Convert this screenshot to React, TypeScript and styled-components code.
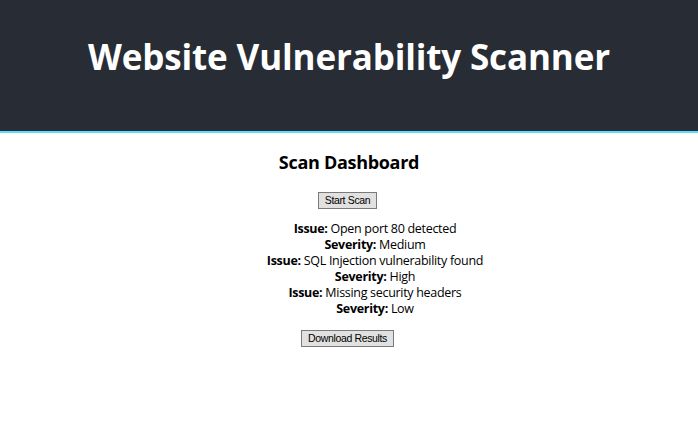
import React from "react";
import styled, { createGlobalStyle } from "styled-components";

const Global = createGlobalStyle`
  html, body { margin: 0; padding: 0; background: #ffffff; }
  body { font-family: "Open Sans", "Noto Sans", sans-serif; color: #000; }
`;

const Header = styled.header`
  background: #282c34;
  height: 131px;
  border-bottom: 2px solid #61dafb;
  display: flex;
  align-items: center;
  justify-content: center;
`;

const Title = styled.h1`
  margin: 0;
  color: #ffffff;
  font-size: 35px;
  font-weight: 700;
  letter-spacing: -0.15px;
  padding-bottom: 18px;
`;

const Main = styled.main`
  display: flex;
  flex-direction: column;
  align-items: center;
  padding-top: 17px;
`;

const Heading = styled.h2`
  margin: 0 0 18px;
  font-size: 18px;
  font-weight: 700;
  letter-spacing: -0.3px;
  line-height: 24px;
`;

const Button = styled.button`
  font-family: "Liberation Sans", Arial, sans-serif;
  font-size: 10.5px;
  letter-spacing: -0.35px;
  height: 17px;
  padding: 0 6px;
  margin-right: 3px;
  background: #e1e1e1;
  border: 1px solid #7a7a7a;
  border-radius: 0;
  color: #000;
  line-height: 15px;
`;

const Results = styled.div`
  margin: 12px 0 13px;
  padding-left: 52px;
  display: flex;
  flex-direction: column;
  align-items: center;
`;

const Line = styled.div`
  font-size: 12.5px;
  line-height: 16px;
  letter-spacing: -0.3px;
`;

const results = [
  { issue: "Open port 80 detected", severity: "Medium" },
  { issue: "SQL Injection vulnerability found", severity: "High" },
  { issue: "Missing security headers", severity: "Low" },
];

export default function App() {
  return (
    <>
      <Global />
      <Header>
        <Title>Website Vulnerability Scanner</Title>
      </Header>
      <Main>
        <Heading>Scan Dashboard</Heading>
        <Button>Start Scan</Button>
        <Results>
          {results.map((r) => (
            <React.Fragment key={r.issue}>
              <Line>
                <strong>Issue:</strong> {r.issue}
              </Line>
              <Line>
                <strong>Severity:</strong> {r.severity}
              </Line>
            </React.Fragment>
          ))}
        </Results>
        <Button>Download Results</Button>
      </Main>
    </>
  );
}
